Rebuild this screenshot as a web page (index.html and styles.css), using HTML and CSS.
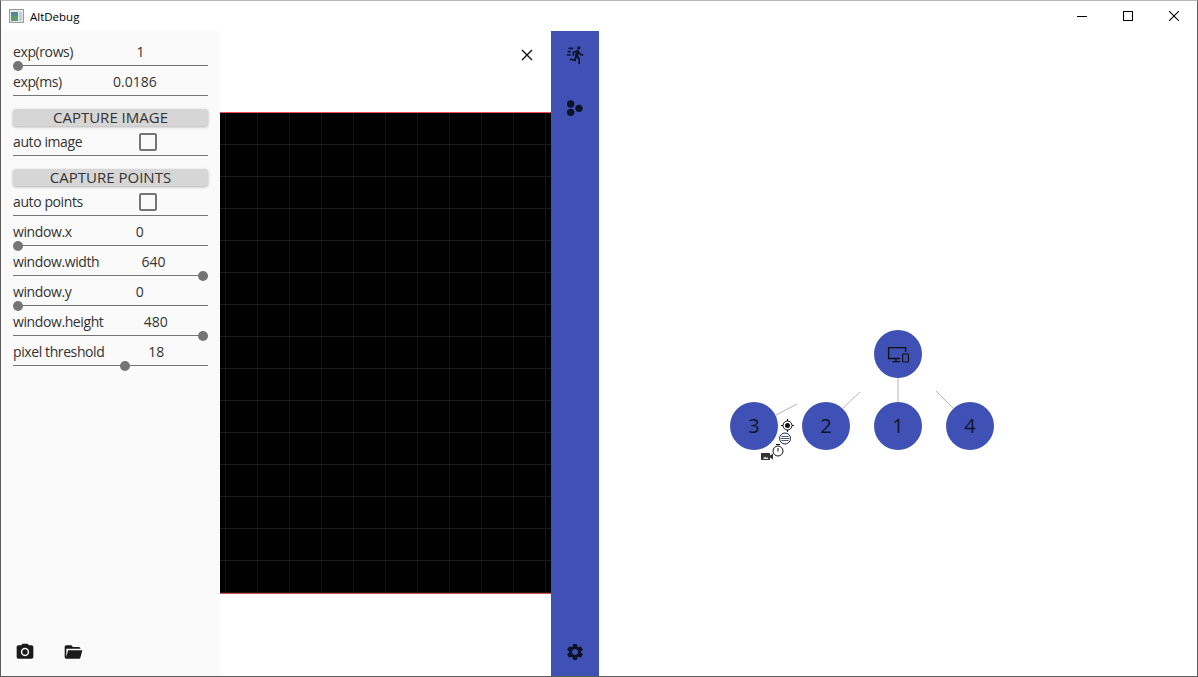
FILE: index.html
```html
<!DOCTYPE html>
<html>
<head>
  <title>AltDebug</title>
  <link rel="stylesheet" href="styles.css">
</head>
<body>
  <div class="window">
    <header class="titlebar">
      <svg class="app-icon" viewBox="0 0 15 14">
        <rect x="0.5" y="0.5" width="14" height="13" fill="#e8eaea" stroke="#9a9a9a"/>
        <rect x="2" y="3" width="7" height="9" fill="#4f8a92"/>
        <rect x="2" y="7" width="7" height="5" fill="#5f9a70"/>
        <rect x="10" y="3" width="3" height="9" fill="#c5d0d4"/>
      </svg>
      <span class="app-name">AltDebug</span>
      <div class="win-buttons">
        <button class="win-btn"><svg viewBox="0 0 10 10"><path d="M0 5.5H10" stroke="#000"/></svg></button>
        <button class="win-btn"><svg viewBox="0 0 10 10"><rect x="0.5" y="0.5" width="9" height="9" fill="none" stroke="#000"/></svg></button>
        <button class="win-btn"><svg viewBox="0 0 10 10"><path d="M0 0L10 10M10 0L0 10" stroke="#000" stroke-width="1.1"/></svg></button>
      </div>
    </header>

    <main class="app">
      <aside class="sidebar">
        <div class="row">
          <span class="label">exp(rows)</span><span class="value">1</span>
          <div class="track"><i class="thumb" style="left: 0%"></i></div>
        </div>
        <div class="row">
          <span class="label">exp(ms)</span><span class="value">0.0186</span>
        </div>

        <button class="capture">CAPTURE IMAGE</button>
        <div class="row">
          <span class="label">auto image</span><span class="checkbox"></span>
        </div>

        <button class="capture">CAPTURE POINTS</button>
        <div class="row">
          <span class="label">auto points</span><span class="checkbox"></span>
        </div>

        <div class="row">
          <span class="label">window.x</span><span class="value">0</span>
          <div class="track"><i class="thumb" style="left: 0%"></i></div>
        </div>
        <div class="row">
          <span class="label">window.width</span><span class="value">640</span>
          <div class="track"><i class="thumb" style="left: 100%"></i></div>
        </div>
        <div class="row">
          <span class="label">window.y</span><span class="value">0</span>
          <div class="track"><i class="thumb" style="left: 0%"></i></div>
        </div>
        <div class="row">
          <span class="label">window.height</span><span class="value">480</span>
          <div class="track"><i class="thumb" style="left: 100%"></i></div>
        </div>
        <div class="row">
          <span class="label">pixel threshold</span><span class="value">18</span>
          <div class="track"><i class="thumb" style="left: 58%"></i></div>
        </div>

        <div class="side-tools">
          <button class="tool">
            <svg viewBox="0 0 24 24"><circle cx="12" cy="12" r="3.2"/><path d="M9 2L7.17 4H4c-1.1 0-2 .9-2 2v12c0 1.1.9 2 2 2h16c1.1 0 2-.9 2-2V6c0-1.1-.9-2-2-2h-3.17L15 2H9zm3 15c-2.76 0-5-2.24-5-5s2.24-5 5-5 5 2.24 5 5-2.24 5-5 5z"/></svg>
          </button>
          <button class="tool">
            <svg viewBox="0 0 24 24"><path d="M19,20H4C2.89,20 2,19.1 2,18V6C2,4.89 2.89,4 4,4H10L12,6H19A2,2 0 0,1 21,8H21L4,8V18L6.14,10H23.21L20.93,18.5C20.7,19.37 19.92,20 19,20Z"/></svg>
          </button>
        </div>
      </aside>

      <section class="viewer">
        <button class="close">
          <svg viewBox="0 0 12 12"><path d="M1 1L11 11M11 1L1 11" stroke="#111" stroke-width="1.4"/></svg>
        </button>
        <div class="image"></div>
      </section>

      <nav class="rail">
        <button class="tool rail-run">
          <svg viewBox="0 0 24 24"><path d="M16.5,5.5A2,2 0 0,0 18.5,3.5A2,2 0 0,0 16.5,1.5A2,2 0 0,0 14.5,3.5A2,2 0 0,0 16.5,5.5M12.9,19.4L13.9,15L16,17V23H18V15.5L15.9,13.5L16.5,10.5C17.89,12.09 19.89,13 22,13V11C20.24,11.03 18.6,10.11 17.7,8.6L16.7,7C16.34,6.4 15.7,6 15,6C14.7,6 14.5,6.1 14.2,6.1L9,8.3V13H11V9.6L12.8,8.9L11.2,17L6.3,16L5.9,18L12.9,19.4M4,9A1,1 0 0,1 3,8A1,1 0 0,1 4,7H7V9H4M5,5A1,1 0 0,1 4,4A1,1 0 0,1 5,3H10V5H5M3,13A1,1 0 0,1 2,12A1,1 0 0,1 3,11H7V13H3Z"/></svg>
        </button>
        <button class="tool rail-dots">
          <svg viewBox="0 0 24 24"><circle cx="6.8" cy="7.2" r="4.4"/><circle cx="16.8" cy="12.4" r="4.4"/><circle cx="6.8" cy="17.2" r="4.4"/></svg>
        </button>
        <button class="tool rail-gear">
          <svg viewBox="0 0 24 24"><path d="M19.14 12.94c.04-.3.06-.61.06-.94 0-.32-.02-.64-.07-.94l2.03-1.58c.18-.14.23-.41.12-.61l-1.92-3.32c-.12-.22-.37-.29-.59-.22l-2.39.96c-.5-.38-1.03-.7-1.62-.94l-.36-2.54c-.04-.24-.24-.41-.48-.41h-3.84c-.24 0-.43.17-.47.41l-.36 2.54c-.59.24-1.13.57-1.62.94l-2.39-.96c-.22-.08-.47 0-.59.22L2.74 8.87c-.12.21-.08.47.12.61l2.03 1.58c-.05.3-.09.63-.09.94s.02.64.07.94l-2.03 1.58c-.18.14-.23.41-.12.61l1.92 3.32c.12.22.37.29.59.22l2.39-.96c.5.38 1.03.7 1.62.94l.36 2.54c.05.24.24.41.48.41h3.84c.24 0 .44-.17.47-.41l.36-2.54c.59-.24 1.13-.56 1.62-.94l2.39.96c.22.08.47 0 .59-.22l1.92-3.32c.12-.22.07-.47-.12-.61l-2.01-1.58zM12 15.6c-1.98 0-3.6-1.62-3.6-3.6s1.62-3.6 3.6-3.6 3.6 1.62 3.6 3.6-1.62 3.6-3.6 3.6z"/></svg>
        </button>
      </nav>

      <section class="graph">
        <div class="node node-root"></div>
        <div class="node node-3">3</div>
        <div class="node node-2">2</div>
        <div class="node node-1">1</div>
        <div class="node node-4">4</div>
        <!-- viewBox uses window coordinates -->
        <svg class="edges" viewBox="599 31 598 645">
          <g stroke="#b5b5b5" stroke-width="1">
            <path d="M898 378V402"/>
            <path d="M860 392L843 408"/>
            <path d="M797 404L776 415"/>
            <path d="M936 391L953 408"/>
          </g>
          <g fill="none" stroke="#111" stroke-width="1">
            <circle cx="787.5" cy="425.5" r="4.5"/>
            <circle cx="787.5" cy="425.5" r="2.5" fill="#111" stroke="none"/>
            <path d="M787.5 419V421M787.5 430V432M781 425.5H783M792 425.5H794"/>
            <circle cx="785" cy="438.5" r="5.5" stroke="#1c2a55"/>
            <path d="M781.5 436.5H788.5M780.5 438.5H789.5M781.5 440.5H788.5" stroke="#1c2a55" stroke-width="0.8"/>
            <circle cx="778" cy="451" r="5"/>
            <path d="M776 444.5H780M778 448V451.5"/>
          </g>
          <path d="M761 453H770V455.5L773 453.5V459.5L770 457.5V460H761Z" fill="#333"/>
          <path d="M763 459L765 456.5L766.5 458L767.5 457L768.5 459Z" fill="#ddd"/>
          <g fill="none" stroke="#111">
            <path d="M900 358.5H888.6V347.6H905.6V352" stroke-width="1.4"/>
            <path d="M896 358.5V361.2M892.5 361.6H900" stroke-width="1.4"/>
            <rect x="902.6" y="354" width="5.8" height="8" rx="0.8" stroke-width="1.2"/>
          </g>
        </svg>
      </section>
    </main>
  </div>
</body>
</html>
```

FILE: styles.css
```css
* {
  box-sizing: border-box;
}
html, body {
  margin: 0;
  height: 100%;
}
body {
  font-family: "Open Sans", "Noto Sans", sans-serif;
  color: #333;
  background: #fff;
  overflow: hidden;
}
button {
  border: 0;
  padding: 0;
  background: none;
  font: inherit;
}
.window {
  display: flex;
  flex-direction: column;
  height: 677px;
  border: 1px solid #5c5c5c;
  border-top-color: #b8b8b8;
}
.titlebar {
  display: flex;
  align-items: center;
  flex: 0 0 30px;
  padding-left: 8px;
  background: #fff;
}
.app-icon {
  width: 15px;
  height: 14px;
}
.app-name {
  margin-left: 6px;
  font-size: 11.5px;
  color: #000;
}
.win-buttons {
  display: flex;
  margin-left: auto;
}
.win-btn {
  display: flex;
  align-items: center;
  justify-content: center;
  width: 46px;
  height: 30px;
}
.win-btn svg {
  width: 10px;
  height: 10px;
}

.app {
  display: flex;
  flex: 1;
  min-height: 0;
}
.sidebar {
  display: flex;
  flex-direction: column;
  flex: 0 0 219px;
  padding: 5px 12px 0;
  background: #fafafa;
  font-size: 14px;
}
.row {
  position: relative;
  display: flex;
  flex: 0 0 30px;
  align-items: center;
  padding-top: 2px;
  border-bottom: 1px solid #757575;
}
.label {
  letter-spacing: -0.4px;
}
.value {
  flex: 1;
  text-align: center;
}
.checkbox {
  width: 18px;
  height: 18px;
  margin-left: auto;
  margin-right: 51px;
  border: 2px solid #757575;
  border-radius: 2px;
}
.track {
  position: absolute;
  left: 5px;
  right: 5px;
  bottom: -1px;
  height: 0;
}
.thumb {
  position: absolute;
  top: 0;
  width: 10px;
  height: 10px;
  margin: -5px 0 0 -5px;
  border-radius: 50%;
  background: #757575;
}
.capture {
  flex: 0 0 17px;
  margin-top: 13px;
  border-radius: 3px;
  background: #d6d6d6;
  box-shadow: 0 1px 3px rgba(0, 0, 0, 0.3);
  color: #333;
  font-size: 15px;
  line-height: 17px;
  text-align: center;
}
.side-tools {
  display: flex;
  gap: 28px;
  margin-top: auto;
  padding: 0 0 14px 2px;
}
.tool {
  display: block;
  width: 20px;
  height: 20px;
}
.tool svg {
  display: block;
  width: 20px;
  height: 20px;
  fill: #1a1a1a;
}

.viewer {
  position: relative;
  display: flex;
  flex: 0 0 331px;
  flex-direction: column;
  justify-content: center;
  padding-bottom: 2px;
}
.close {
  position: absolute;
  top: 18px;
  right: 18px;
  width: 12px;
  height: 12px;
}
.close svg {
  display: block;
}
.image {
  height: 482px;
  border-top: 1px solid #f04a4a;
  border-bottom: 1px solid #d05050;
  background-color: #000;
  background-image:
    linear-gradient(#1c1c1c 1px, transparent 1px),
    linear-gradient(90deg, #141414 1px, transparent 1px);
  background-size: 32px 32px;
  background-position: 0 31px, 5px 0;
}

.rail {
  display: flex;
  flex: 0 0 48px;
  flex-direction: column;
  align-items: center;
  padding: 14px 0;
  background: #3f51b5;
}
.rail .tool svg {
  fill: #0d1226;
}
.rail-dots {
  margin-top: 33px;
}
.rail-gear {
  margin-top: auto;
}

.graph {
  position: relative;
  flex: 1;
}
.edges {
  position: absolute;
  top: 0;
  left: 0;
  width: 598px;
  height: 645px;
}
.node {
  position: absolute;
  top: 371px;
  width: 48px;
  height: 48px;
  border-radius: 50%;
  background: #3f51b5;
  color: #10142b;
  font-size: 20px;
  line-height: 48px;
  text-align: center;
}
.node-root {
  top: 299px;
  left: 275px;
}
.node-3 {
  left: 131px;
}
.node-2 {
  left: 203px;
}
.node-1 {
  left: 275px;
}
.node-4 {
  left: 347px;
}
```
